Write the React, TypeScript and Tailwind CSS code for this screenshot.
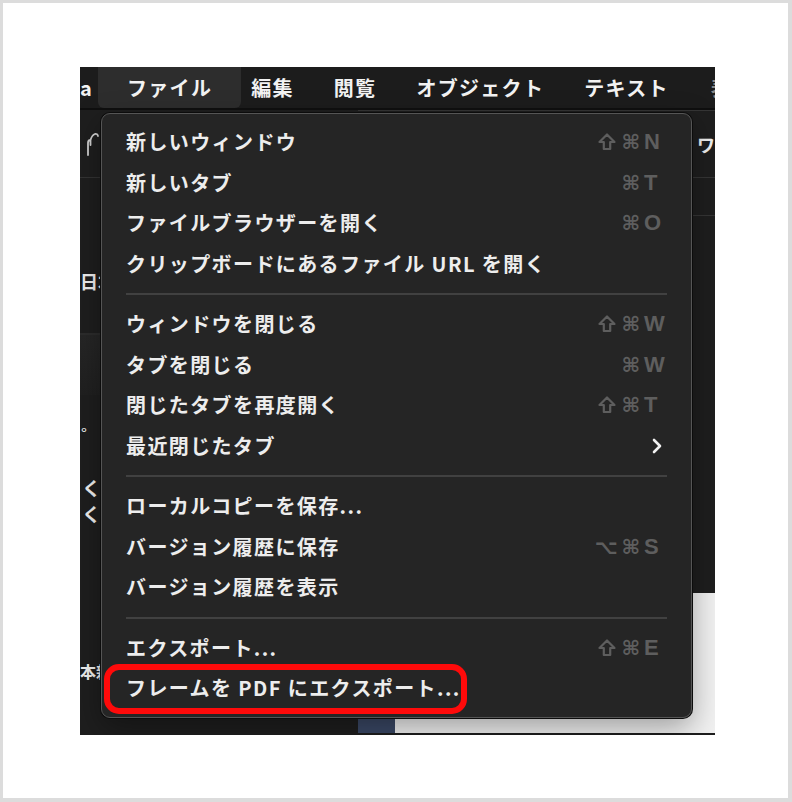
import React from 'react';

type Row = { label: string; mods?: string[]; k?: string; submenu?: boolean };

const groups: Row[][] = [
  [
    { label: '新しいウィンドウ', mods: ['shift', '⌘'], k: 'N' },
    { label: '新しいタブ', mods: ['⌘'], k: 'T' },
    { label: 'ファイルブラウザーを開く', mods: ['⌘'], k: 'O' },
    { label: 'クリップボードにあるファイル URL を開く' },
  ],
  [
    { label: 'ウィンドウを閉じる', mods: ['shift', '⌘'], k: 'W' },
    { label: 'タブを閉じる', mods: ['⌘'], k: 'W' },
    { label: '閉じたタブを再度開く', mods: ['shift', '⌘'], k: 'T' },
    { label: '最近閉じたタブ', submenu: true },
  ],
  [
    { label: 'ローカルコピーを保存...' },
    { label: 'バージョン履歴に保存', mods: ['⌥', '⌘'], k: 'S' },
    { label: 'バージョン履歴を表示' },
  ],
  [
    { label: 'エクスポート...', mods: ['shift', '⌘'], k: 'E' },
    { label: 'フレームを PDF にエクスポート...' },
  ],
];

const menuBar = ['編集', '閲覧', 'オブジェクト', 'テキスト'];

const font = { fontFamily: '"Noto Sans CJK JP", "Noto Sans", sans-serif' };
const keyFont = { fontFamily: '"DejaVu Sans", "Noto Sans", sans-serif' };

const ShiftIcon = () => (
  <svg width="20" height="20" viewBox="0 0 20 20">
    <path d="M10 2.5 L17.5 10 H13.2 V17 H6.8 V10 H2.5 Z" fill="none" stroke="#5e5e5e" strokeWidth="2.2" strokeLinejoin="round" />
  </svg>
);

const MenuRow = ({ row }: { row: Row }) => (
  <div className="flex h-[40.5px] items-center justify-between pl-[24px] pr-[21px]">
    <span className="text-[20px] font-semibold tracking-[1.4px] text-[#ededed] whitespace-nowrap">
      {row.label}
    </span>
    {row.k && (
      <div className="flex items-center text-[#5e5e5e]">
        <div className="flex items-center gap-[4px]">
          {row.mods?.map((m) =>
            m === 'shift' ? (
              <ShiftIcon key={m} />
            ) : (
              <span key={m} className="text-[20px] font-bold leading-none" style={keyFont}>
                {m}
              </span>
            )
          )}
        </div>
        <span
          className="ml-[4px] w-[26px] text-[22px] font-bold leading-none"
          style={{ fontFamily: '"Liberation Sans", Arial, sans-serif' }}
        >
          {row.k}
        </span>
      </div>
    )}
    {row.submenu && (
      <svg width="12" height="18" viewBox="0 0 12 18" className="mr-[7px]">
        <path d="M3 3 L9 9 L3 15" fill="none" stroke="#f2f2f2" strokeWidth="2.6" strokeLinecap="round" strokeLinejoin="round" />
      </svg>
    )}
  </div>
);

export default function App() {
  return (
    <div
      className="h-[802px] w-[792px] overflow-hidden border-t-[3px] border-l-[3px] border-r-4 border-b-4 border-[#dcdcdc] bg-white"
      style={font}
    >
      <div className="relative ml-[77px] mt-[64px] h-[668px] w-[635px] overflow-hidden bg-[#1e1e1e]">
        {/* menu bar */}
        <div className="flex h-[43px] items-stretch overflow-hidden border-b-2 border-[#0f0f0f] bg-[#1c1c1c] text-[20px] font-bold tracking-[1.3px] text-[#f2f2f2] whitespace-nowrap">
          <span className="flex w-[18px] shrink-0 items-center">a</span>
          <span className="flex shrink-0 items-center rounded-b-[6px] bg-[#2d2d2d] px-[29px]">ファイル</span>
          <div className="-ml-[10px] flex shrink-0 items-stretch">
            {menuBar.map((m) => (
              <span key={m} className="flex shrink-0 items-center px-[20px]">
                {m}
              </span>
            ))}
            <span className="flex shrink-0 items-center pl-[22px] text-[#888]">表示</span>
          </div>
        </div>

        {/* app body behind the menu */}
        <div className="flex h-[623px]">
          <div className="flex w-[278px] shrink-0 flex-col bg-[#1e1e1e] text-[#f0f0f0]">
            <div className="flex h-[68px] shrink-0 items-center border-b border-[#333] pl-[5px]">
              <svg width="16" height="28" viewBox="0 0 16 28">
                <path d="M3 25 V13 Q3 10 5.5 10 L5.5 15 M5.5 10 Q7 5 10 4 Q12.5 3.5 13 6" fill="none" stroke="#d0d0d0" strokeWidth="1.8" strokeLinecap="round" />
              </svg>
            </div>
            <div className="flex h-[157px] shrink-0 items-end border-b-2 border-[#2c2c2c] pb-[38px] text-[18px] font-semibold whitespace-nowrap">
              <span>日本語</span>
            </div>
            <div className="h-[60px] shrink-0 bg-gradient-to-b from-[#262626] to-[#202020]" />
            <div className="h-[80px] shrink-0 pt-[28px] pl-[1px] text-[16px] leading-[20px]">°</div>
            <div className="flex flex-col pl-[2px] text-[19px] font-semibold leading-[26px]">
              <span>く</span>
              <span>く</span>
            </div>
            <div className="mt-auto mb-[50px] text-[16px] font-semibold whitespace-nowrap">本新</div>
          </div>
          <div className="flex min-w-0 flex-1 flex-col">
            <div className="h-[483px] shrink-0 bg-[#1e1e1e]">
              <div className="flex h-[68px] items-center overflow-hidden border-t border-b border-[#353535] pl-[339px] text-[18px] font-semibold text-[#eee] whitespace-nowrap">
                ワー
              </div>
              <div className="h-[38px] border-b border-[#353535]" />
            </div>
            <div className="flex flex-1">
              <div className="w-[37px] shrink-0 bg-[#3a4865]" />
              <div className="flex-1 bg-[#f1f1f1]" />
            </div>
          </div>
        </div>

        {/* dropdown menu */}
        <div className="absolute left-[21px] top-[46px] w-[591px] rounded-[9px] border border-[#555] bg-[#252525] py-[8px] shadow-[0_0_0_1px_#0c0c0c,0_10px_30px_rgba(0,0,0,0.35)]">
          {groups.map((g, i) => (
            <div key={i}>
              {i > 0 && (
                <div className="flex h-[20px] items-center px-[24px]">
                  <div className="h-[2px] w-full bg-[#414141]" />
                </div>
              )}
              {g.map((r) => (
                <MenuRow key={r.label} row={r} />
              ))}
            </div>
          ))}
        </div>

        {/* highlight annotation */}
        <div className="absolute left-[24px] top-[597px] h-[50px] w-[363px] rounded-[15px] border-[6px] border-[#ff0a0a]" />
      </div>
    </div>
  );
}
